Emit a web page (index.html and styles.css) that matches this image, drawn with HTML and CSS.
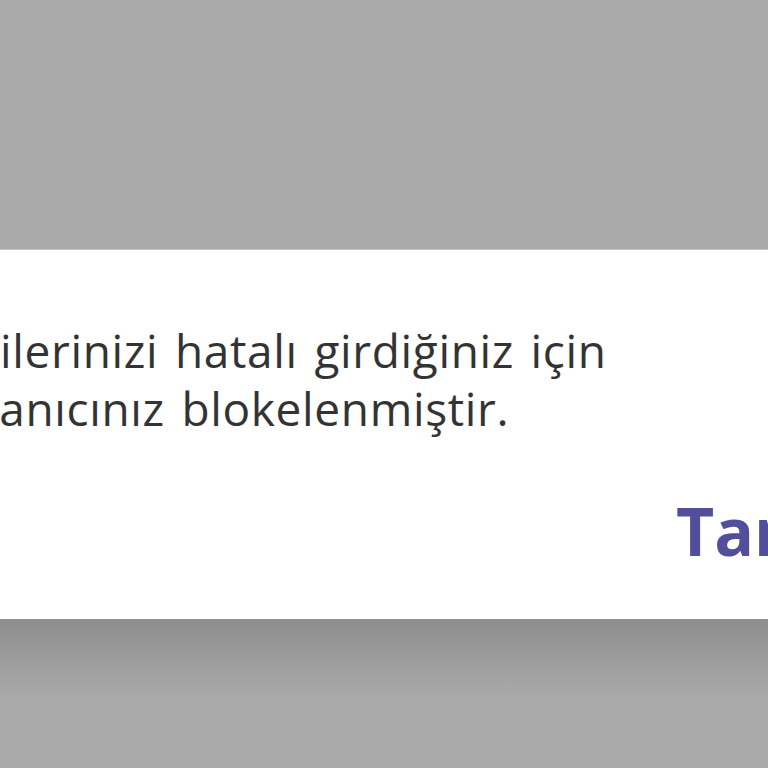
FILE: index.html
```html
<!DOCTYPE html>
<html lang="tr">
<head>
<meta charset="utf-8">
<link rel="stylesheet" href="styles.css">
</head>
<body>
<div class="screen">
  <div class="dialog">
    <p class="message">
      <span class="line line-1">Bilgilerinizi hatalı girdiğiniz için</span>
      <span class="line line-2">Kullanıcınız blokelenmiştir.</span>
    </p>
    <div class="actions">
      <button class="btn">Tamam</button>
    </div>
  </div>
  <div class="shadow"></div>
</div>
</body>
</html>
```
FILE: styles.css
```css
html, body {
  margin: 0;
  padding: 0;
  background: #aaaaaa;
  overflow: hidden;
}
.screen {
  width: 768px;
  height: 768px;
  overflow: hidden;
  padding-top: 249px;
  box-sizing: border-box;
}
.dialog {
  background: #ffffff;
  height: 370px;
  box-sizing: border-box;
  padding-top: 71px;
  border-top: 1px solid #c4c4c4;
  overflow: hidden;
  white-space: nowrap;
}
.message {
  margin: 0;
  font-family: "Open Sans", "Noto Sans", sans-serif;
  font-size: 46px;
  line-height: 58px;
  letter-spacing: 0.65px;
  word-spacing: 4px;
  color: #333333;
}
.line {
  display: block;
}
.line-1 {
  margin-left: -80.5px;
}
.line-2 {
  margin-left: -83px;
}
.actions {
  margin-top: 60px;
  padding-left: 676px;
}
.btn {
  border: 0;
  padding: 0;
  background: none;
  font-family: "Open Sans", "Noto Sans", sans-serif;
  font-weight: 700;
  font-size: 66px;
  line-height: 66px;
  color: #514f9b;
}
.shadow {
  height: 80px;
  background: linear-gradient(#8e8e8e, #aaaaaa);
}
```
